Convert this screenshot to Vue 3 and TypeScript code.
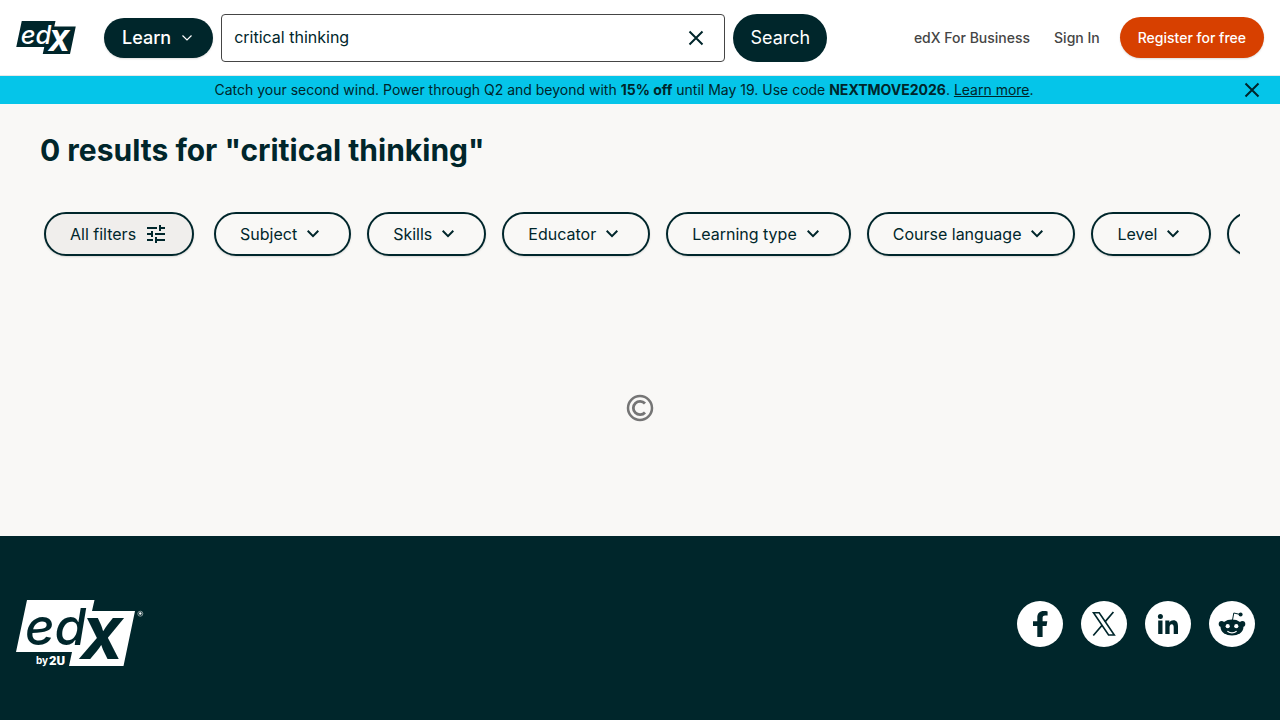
<script setup lang="ts">
import { ref } from 'vue'

const query = ref('critical thinking')
const submitted = ref('critical thinking')
const bannerOpen = ref(true)
const filters: string[] = ['Subject', 'Skills', 'Educator', 'Learning type', 'Course language', 'Level']

function search(): void {
  submitted.value = query.value
}
</script>

<template>
  <div class="page">
    <header class="header">
      <a class="logo" href="#" aria-label="edX home">
        <svg width="60" height="33" viewBox="0 0 119 66">
          <path class="dark" d="M11 0H78.500L76 11H119L107.500 66H53L56 52H0Z" />
          <text class="logo-ed light" x="9" y="45">ed</text>
          <text class="logo-x light" x="64" y="59">X</text>
        </svg>
      </a>
      <button class="pill learn" type="button">
        Learn
        <svg width="10" height="6" viewBox="0 0 10 6"><path d="M.5.500 5 5 9.500.500" fill="none" stroke="currentColor" stroke-width="1.200" /></svg>
      </button>
      <form class="search" @submit.prevent="search">
        <div class="field">
          <input v-model="query" type="text" aria-label="Search" />
          <button class="bare" type="button" aria-label="Clear" @click="query = ''">
            <svg width="24" height="24" viewBox="0 0 24 24"><path d="M5.500 5.500l13 13M18.500 5.500l-13 13" stroke="currentColor" stroke-width="2" /></svg>
          </button>
        </div>
        <button class="pill submit" type="submit">Search</button>
      </form>
      <nav class="nav">
        <a href="#">edX For Business</a>
        <a href="#">Sign In</a>
        <a class="register" href="#">Register for free</a>
      </nav>
    </header>

    <div v-if="bannerOpen" class="banner">
      <p>
        Catch your second wind. Power through Q2 and beyond with <b>15% off</b> until May 19. Use code
        <b>NEXTMOVE2026</b>. <a href="#">Learn more</a>.
      </p>
      <button class="bare" type="button" aria-label="Close" @click="bannerOpen = false">
        <svg width="24" height="24" viewBox="0 0 24 24"><path d="M5.500 5.500l13 13M18.500 5.500l-13 13" stroke="currentColor" stroke-width="2" /></svg>
      </button>
    </div>

    <main class="main">
      <h1>0 results for "{{ submitted }}"</h1>
      <div class="filters">
        <button class="filter all" type="button">
          All filters
          <svg width="24" height="24" viewBox="0 0 24 24"><path fill="currentColor" d="M3 17v2h6v-2H3zM3 5v2h10V5H3zm10 16v-2h8v-2h-8v-2h-2v6h2zM7 9v2H3v2h4v2h2V9H7zm14 4v-2H11v2h10zm-6-4h2V7h4V5h-4V3h-2v6z" /></svg>
        </button>
        <button v-for="name in filters" :key="name" class="filter" type="button">
          {{ name }}
          <svg width="24" height="24" viewBox="0 0 24 24"><path fill="currentColor" d="M7.410 8.090 12 12.670l4.590-4.580L18 9.500l-6 6-6-6z" /></svg>
        </button>
        <button class="filter more" type="button" aria-label="More filters"></button>
      </div>
      <div class="loading" role="status" aria-label="Loading">
        <svg width="28" height="28" viewBox="0 0 28 28" fill="none" stroke="#757575">
          <circle cx="14" cy="14" r="12" stroke-width="2.500" />
          <path d="M19 9.500A6.700 6.700 0 1 0 19 18.500" stroke-width="2.800" />
        </svg>
      </div>
    </main>

    <footer class="footer">
      <a class="logo" href="#" aria-label="edX by 2U">
        <svg width="128" height="66" viewBox="0 0 128 66">
          <path class="light" d="M11 0H78.500L76 11H119L107.500 66H53L56 52H0Z" />
          <text class="logo-ed dark" x="9" y="45">ed</text>
          <text class="logo-x dark" x="64" y="59">X</text>
          <text class="logo-by light" x="20" y="64">by</text>
          <text class="logo-2u light" x="33" y="65">2U</text>
          <circle cx="124.300" cy="13.700" r="2.500" fill="none" stroke="#a5b0b1" stroke-width=".8" />
          <circle cx="124.300" cy="13.500" r="1.200" class="light" />
        </svg>
      </a>
      <nav class="social">
        <a href="#" aria-label="Facebook">
          <svg width="46" height="46" viewBox="0 0 46 46"><path fill="currentColor" d="M20.300 36V24.900H16v-4.700h4.300v-3.600c0-4.300 2.500-6.600 6.400-6.600 1.500 0 3.100.2 3.900.4v4.200h-2.400c-2 0-2.600 1.100-2.600 2.500v3.100h4.700l-.8 4.700h-3.900V36z" /></svg>
        </a>
        <a href="#" aria-label="X">
          <svg width="46" height="46" viewBox="0 0 46 46" fill="none" stroke="currentColor"><path d="M12.500 11.700h5.700L33.300 34h-5.700z" stroke-width="1.600" /><path d="M32.400 11 24 20.900M21.300 24 12.300 34.500" stroke-width="1.700" /></svg>
        </a>
        <a href="#" aria-label="LinkedIn">
          <svg width="46" height="46" viewBox="0 0 46 46"><circle cx="15.400" cy="15.600" r="2.500" fill="currentColor" /><path fill="currentColor" d="M13.200 19.500h4.300V33h-4.300zM20.300 19.500h4.100v1.900c.8-1.400 2.200-2.200 4-2.200 3.300 0 4.600 2.200 4.600 6V33h-4.300v-6.600c0-1.900-.4-3.200-1.900-3.200-1.700 0-2.200 1.300-2.200 3.200V33h-4.300z" /></svg>
        </a>
        <a href="#" aria-label="Reddit">
          <svg width="46" height="46" viewBox="0 0 46 46">
            <g fill="currentColor"><circle cx="12.600" cy="23" r="2.900" /><circle cx="33.400" cy="23" r="2.900" /><ellipse cx="23" cy="26.600" rx="11.400" ry="8" /><circle cx="31.600" cy="13.500" r="2" /></g>
            <path d="M23.500 19l1.300-7 6.600 1.500" fill="none" stroke="currentColor" stroke-width="1" />
            <g fill="#fff"><circle cx="18.700" cy="25.200" r="2.100" /><circle cx="27.300" cy="25.200" r="2.100" /></g>
            <path d="M18.400 30.200q4.600 3.300 9.200 0" fill="none" stroke="#fff" stroke-width="1.300" />
          </svg>
        </a>
      </nav>
    </footer>
  </div>
</template>

<style>
body { margin: 0; }
</style>

<style scoped>
.page {
  display: flex;
  flex-direction: column;
  min-height: 100vh;
  background: #f9f8f6;
  color: #00262b;
  font: 16px/24px Inter, "Liberation Sans", sans-serif;
}
.page * { box-sizing: border-box; }
button, input { font: inherit; color: inherit; }
button { cursor: pointer; }
svg { display: block; flex: none; overflow: visible; }
.dark { fill: #00262b; }
.light { fill: #fff; }
.logo-ed { font-size: 51px; font-weight: 500; font-style: italic; }
.logo-x { font-size: 56px; font-weight: 800; font-style: italic; }
.logo-by { font-size: 10px; font-weight: 700; }
.logo-2u { font: 900 13px "Liberation Sans Narrow", Roboto, sans-serif; }
.header {
  display: flex;
  align-items: center;
  height: 76px;
  padding: 0 16px;
  background: #fff;
  border-bottom: 1px solid #e7e7e7;
}
.pill {
  border: 0;
  border-radius: 24px;
  background: #00262b;
  color: #fff;
  font-size: 18px;
}
.learn {
  display: flex;
  align-items: center;
  gap: 11px;
  height: 40px;
  margin: 0 8px 0 28px;
  padding: 0 21px 0 18px;
  font-weight: 500;
  box-shadow: 0 1px 2px #0002;
}
.search { display: flex; flex: 0 1 606px; gap: 8px; }
.field {
  display: flex;
  flex: 1;
  align-items: center;
  min-width: 0;
  height: 48px;
  padding: 0 16px 0 12px;
  border: 1px solid #454545;
  border-radius: 4px;
}
.field input { flex: 1; min-width: 0; padding: 0 0 2px; border: 0; outline: 0; background: none; }
.bare { padding: 0; border: 0; background: none; }
.submit { height: 48px; padding: 0 17px; }
.nav {
  display: flex;
  align-items: center;
  gap: 24px;
  margin-left: auto;
  font-size: 14px;
  font-weight: 500;
  white-space: nowrap;
}
.nav a { color: #454545; text-decoration: none; }
.nav .register {
  margin-left: -4px;
  padding: 8px 18px;
  border-radius: 24px;
  background: #d74000;
  color: #fff;
  line-height: 25px;
  box-shadow: 0 1px 2px #0002;
}
.banner {
  display: flex;
  align-items: center;
  gap: 8px;
  min-height: 28px;
  padding: 0 16px;
  background: #05c5e9;
  font-size: 14px;
}
.banner p { flex: 1; margin: 0; text-align: center; }
.banner a { color: inherit; }
.main { padding: 24px 40px 114px; }
h1 { margin: 0; font-size: 30px; line-height: 44px; font-weight: 700; }
.filters { display: flex; gap: 16px; margin-top: 36px; padding: 4px; padding-right: 0; overflow: hidden; }
.filter {
  display: flex;
  flex: none;
  align-items: center;
  gap: 4px;
  height: 44px;
  padding: 0 24px;
  border: 2px solid #00262b;
  border-radius: 22px;
  background: #fff0;
  box-shadow: 0 1px 2px #0002;
}
.all { gap: 8px; margin-right: 4px; background: #f0eeec; }
.more { width: 120px; }
.loading { display: flex; justify-content: center; margin-top: 134px; }
.footer {
  display: flex;
  flex: 1;
  align-items: flex-start;
  justify-content: space-between;
  padding: 64px 25px 54px 16px;
  background: #00262b;
}
.social { display: flex; gap: 18px; padding-top: 1px; }
.social a { border-radius: 50%; background: #fff; color: #00262b; }
</style>
